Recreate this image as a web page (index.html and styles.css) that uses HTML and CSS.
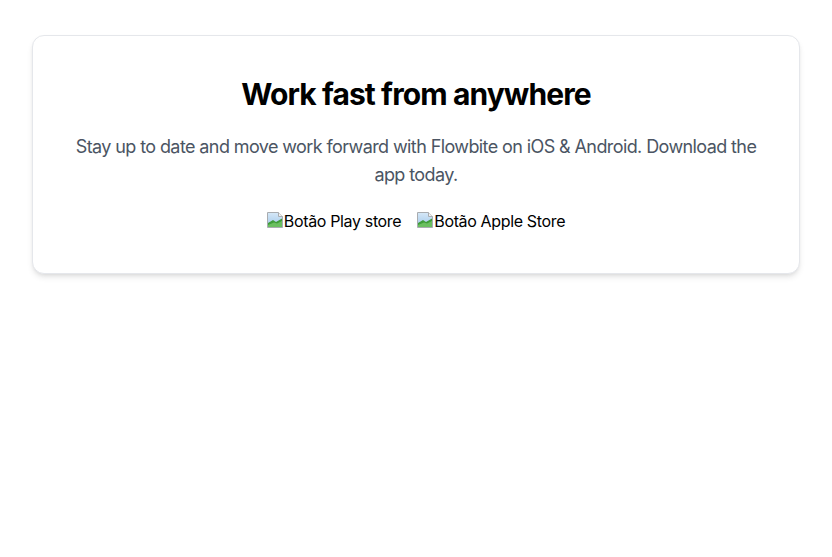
FILE: index.html
```html
<!DOCTYPE html>
<html lang="pt">
<head>
<meta charset="utf-8">
<title>Work fast from anywhere</title>
<link rel="stylesheet" href="styles.css">
</head>
<body>
<main class="page">
  <section class="card">
    <h1 class="title">Work fast from anywhere</h1>
    <p class="lead">Stay up to date and move work forward with Flowbite on iOS &amp; Android. Download the app today.</p>
    <div class="stores">
      <a class="store" href="#">
        <svg class="broken" width="16" height="16" viewBox="0 0 16 16" aria-hidden="true">
          <defs>
            <linearGradient id="sky1" x1="0" y1="0" x2="0" y2="1">
              <stop offset="0" stop-color="#d6e8f7"/>
              <stop offset="1" stop-color="#9ec6ea"/>
            </linearGradient>
          </defs>
          <path d="M0.5 0.5H11.5L15.5 4.5V15.5H0.5Z" fill="url(#sky1)" stroke="#a9acb0"/>
          <path d="M11.5 0.5V4.5H15.5" fill="#f1f1f1" stroke="#a9acb0"/>
          <path d="M1 15V11L6 8L9 10L15 6.5V9.5L6 15Z" fill="#3f9d3a"/>
          <path d="M1 15V13L7 10.5L10 11.5L15 9V15Z" fill="#6abf5f"/>
        </svg><span>Botão Play store</span>
      </a>
      <a class="store" href="#">
        <svg class="broken" width="16" height="16" viewBox="0 0 16 16" aria-hidden="true">
          <defs>
            <linearGradient id="sky2" x1="0" y1="0" x2="0" y2="1">
              <stop offset="0" stop-color="#d6e8f7"/>
              <stop offset="1" stop-color="#9ec6ea"/>
            </linearGradient>
          </defs>
          <path d="M0.5 0.5H11.5L15.5 4.5V15.5H0.5Z" fill="url(#sky2)" stroke="#a9acb0"/>
          <path d="M11.5 0.5V4.5H15.5" fill="#f1f1f1" stroke="#a9acb0"/>
          <path d="M1 15V11L6 8L9 10L15 6.5V9.5L6 15Z" fill="#3f9d3a"/>
          <path d="M1 15V13L7 10.5L10 11.5L15 9V15Z" fill="#6abf5f"/>
        </svg><span>Botão Apple Store</span>
      </a>
    </div>
  </section>
</main>
</body>
</html>
```
FILE: styles.css
```css
* { box-sizing: border-box; }
html, body { margin: 0; padding: 0; background: #fff; }
body {
  font-family: Inter, "Noto Sans", "Liberation Sans", sans-serif;
  color: #111827;
}
.page {
  padding: 35px 32px;
}
.card {
  background: #fff;
  border: 1px solid #e5e7eb;
  border-radius: 12px;
  box-shadow: 0 4px 6px -1px rgba(0,0,0,0.1), 0 2px 4px -2px rgba(0,0,0,0.1);
  padding: 40px;
  text-align: center;
}
.title {
  margin: 0 0 21px;
  font-size: 30px;
  line-height: 36px;
  font-weight: 700;
  color: #000;
  letter-spacing: -0.9px;
}
.lead {
  margin: 0 0 20px;
  font-size: 18px;
  line-height: 28px;
  color: #4b5563;
  letter-spacing: -0.6px;
}
.stores {
  display: flex;
  justify-content: center;
  gap: 16px;
}
.store {
  display: inline-flex;
  align-items: center;
  height: 24px;
  font-size: 16px;
  color: #000;
  text-decoration: none;
  letter-spacing: -0.35px;
}
.broken {
  flex: none;
  display: block;
  margin: -2px 1px 0 0;
}
```
